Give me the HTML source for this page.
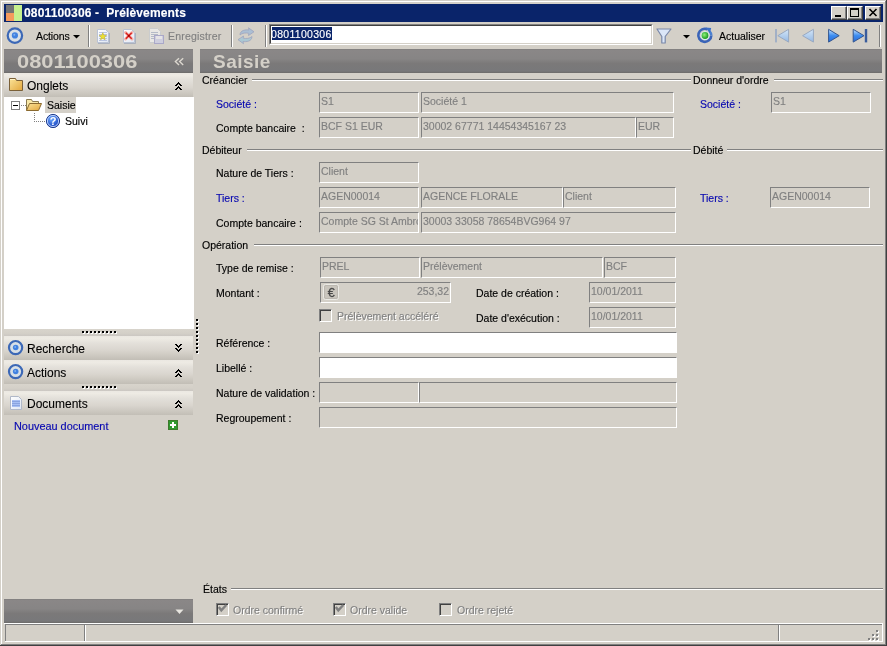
<!DOCTYPE html>
<html><head><meta charset="utf-8">
<style>
*{margin:0;padding:0;box-sizing:border-box}
html,body{width:887px;height:646px;overflow:hidden;background:#D4D0C8;font-family:"Liberation Sans",sans-serif;font-size:10.5px;color:#000}
.a{position:absolute}
.t{position:absolute;white-space:pre;line-height:20px;will-change:transform;-webkit-text-stroke:0.15px currentColor}
.hdr{position:absolute;background:linear-gradient(#7d7b7b 0px,#8a8787 1px,#878585 40%,#7b7979 60%,#78787a 92%,#6d6b69 100%)}
.sec{position:absolute;background:linear-gradient(#ebe8e2 0%,#eeebe4 10%,#e3e0da 30%,#d9d5ce 60%,#cbc7bf 85%,#c2beb6 100%)}
.in{position:absolute;border-top:1px solid #808080;border-left:1px solid #808080;border-bottom:1px solid #fff;border-right:1px solid #fff}
.btn{position:absolute;width:16px;height:14px;background:#D4D0C8;border-top:1px solid #fff;border-left:1px solid #fff;border-right:1px solid #404040;border-bottom:1px solid #404040;box-shadow:inset -1px -1px 0 #808080}
svg{position:absolute;overflow:visible}
</style></head><body>
<div class="a" style="left:1px;top:1px;width:884px;height:1px;background:#fff"></div>
<div class="a" style="left:1px;top:1px;width:1px;height:643px;background:#fff"></div>
<div class="a" style="left:885px;top:1px;width:1px;height:644px;background:#808080"></div>
<div class="a" style="left:886px;top:0px;width:1px;height:646px;background:#404040"></div>
<div class="a" style="left:1px;top:644px;width:885px;height:1px;background:#808080"></div>
<div class="a" style="left:0px;top:645px;width:887px;height:1px;background:#404040"></div>
<div class="a" style="left:4px;top:4px;width:879px;height:18px;background:#0A246A"></div>
<div class="a" style="left:6px;top:5px;width:8px;height:8px;background:#737373"></div>
<div class="a" style="left:6px;top:13px;width:8px;height:8px;background:#F59A5C"></div>
<div class="a" style="left:14px;top:5px;width:8px;height:16px;background:#C6F08E"></div>
<div class="t" style="left:24px;top:3px;font-size:12px;color:#fff;font-weight:bold;letter-spacing:0.15px;">0801100306 -  Prélèvements</div>
<div class="btn" style="left:831px;top:6px"></div>
<div class="btn" style="left:847px;top:6px"></div>
<div class="btn" style="left:865px;top:6px"></div>
<div class="t" style="left:36px;top:26px;letter-spacing:-0.1px;">Actions</div>
<div class="a" style="left:88px;top:25px;width:1px;height:22px;background:#808080"></div>
<div class="a" style="left:89px;top:25px;width:1px;height:22px;background:#fff"></div>
<div class="a" style="left:231px;top:25px;width:1px;height:22px;background:#808080"></div>
<div class="a" style="left:232px;top:25px;width:1px;height:22px;background:#fff"></div>
<div class="a" style="left:265px;top:25px;width:1px;height:22px;background:#808080"></div>
<div class="a" style="left:266px;top:25px;width:1px;height:22px;background:#fff"></div>
<div class="t" style="left:168px;top:26px;color:#808080;letter-spacing:0.2px;">Enregistrer</div>
<div class="a" style="left:269px;top:24px;width:384px;height:21px;background:#fff;border-top:1px solid #808080;border-left:1px solid #808080;border-right:1px solid #fff;border-bottom:1px solid #fff"></div>
<div class="a" style="left:270px;top:25px;width:382px;height:19px;border-top:1px solid #404040;border-left:1px solid #404040;border-right:1px solid #D4D0C8;border-bottom:1px solid #D4D0C8"></div>
<div class="a" style="left:272px;top:27px;width:60px;height:13px;background:#0A246A"></div>
<div class="t" style="left:271px;top:24px;color:#fff;letter-spacing:0.3px;clip-path:inset(0 0 0 1px);">0801100306</div>
<div class="t" style="left:719px;top:26px;">Actualiser</div>
<div class="a" style="left:879px;top:25px;width:1px;height:22px;background:#808080"></div>
<div class="a" style="left:880px;top:25px;width:1px;height:22px;background:#fff"></div>
<div class="hdr" style="left:4px;top:49px;width:189px;height:24px"></div>
<div class="t" style="left:17px;top:52px;font-size:19px;color:#D4D0C8;font-weight:bold;letter-spacing:0px;transform:scaleX(1.15);transform-origin:0 0;-webkit-text-stroke:0;">0801100306</div>
<div class="sec" style="left:4px;top:73px;width:189px;height:24px"></div>
<div class="t" style="left:27px;top:76px;font-size:12px;-webkit-text-stroke:0.1px currentColor;">Onglets</div>
<div class="a" style="left:4px;top:97px;width:190px;height:232px;background:#fff"></div>
<div class="a" style="left:4px;top:329px;width:189px;height:7px;background:linear-gradient(#d8d4cc,#d4d0c8 60%,#cbc7c2)"></div>
<div class="a" style="left:4px;top:384px;width:189px;height:7px;background:linear-gradient(#d8d4cc,#d4d0c8 60%,#cbc7c2)"></div>
<div class="a" style="left:45px;top:97px;width:31px;height:16px;background:#D4D0C8"></div>
<div class="t" style="left:47px;top:95px;">Saisie</div>
<div class="t" style="left:65px;top:111px;">Suivi</div>
<div class="sec" style="left:4px;top:336px;width:189px;height:24px"></div>
<div class="t" style="left:27px;top:339px;font-size:12px;-webkit-text-stroke:0.1px currentColor;">Recherche</div>
<div class="sec" style="left:4px;top:360px;width:189px;height:24px"></div>
<div class="t" style="left:27px;top:363px;font-size:12px;-webkit-text-stroke:0.1px currentColor;">Actions</div>
<div class="sec" style="left:4px;top:391px;width:189px;height:24px"></div>
<div class="t" style="left:27px;top:394px;font-size:12px;-webkit-text-stroke:0.1px currentColor;">Documents</div>
<div class="t" style="left:14px;top:416px;font-size:10.9px;color:#0808b0;">Nouveau document</div>
<div class="hdr" style="left:4px;top:599px;width:189px;height:24px"></div>
<div class="hdr" style="left:200px;top:49px;width:682px;height:24px"></div>
<div class="t" style="left:213px;top:52px;font-size:19px;color:#D4D0C8;font-weight:bold;letter-spacing:0.5px;-webkit-text-stroke:0;">Saisie</div>
<div class="t" style="left:202px;top:70px;">Créancier</div>
<div class="a" style="left:252px;top:79px;width:439px;height:1px;background:#808080"></div>
<div class="a" style="left:252px;top:80px;width:439px;height:1px;background:#fff"></div>
<div class="t" style="left:693px;top:70px;">Donneur d'ordre</div>
<div class="a" style="left:774px;top:79px;width:109px;height:1px;background:#808080"></div>
<div class="a" style="left:774px;top:80px;width:109px;height:1px;background:#fff"></div>
<div class="t" style="left:216px;top:94px;color:#0808b0;">Société :</div>
<div class="in" style="left:319px;top:92px;width:100px;height:21px;"></div>
<div class="t" style="left:321px;top:91px;color:#808080;width:97px;overflow:hidden;">S1</div>
<div class="in" style="left:421px;top:92px;width:253px;height:21px;"></div>
<div class="t" style="left:423px;top:91px;color:#808080;width:250px;overflow:hidden;">Société 1</div>
<div class="t" style="left:216px;top:118px;">Compte bancaire  :</div>
<div class="in" style="left:319px;top:117px;width:100px;height:21px;"></div>
<div class="t" style="left:321px;top:116px;color:#808080;width:97px;overflow:hidden;">BCF S1 EUR</div>
<div class="in" style="left:421px;top:117px;width:215px;height:21px;"></div>
<div class="t" style="left:423px;top:116px;color:#808080;width:212px;overflow:hidden;">30002 67771 14454345167 23</div>
<div class="in" style="left:636px;top:117px;width:38px;height:21px;"></div>
<div class="t" style="left:638px;top:116px;color:#808080;width:35px;overflow:hidden;">EUR</div>
<div class="t" style="left:700px;top:94px;color:#0808b0;">Société :</div>
<div class="in" style="left:771px;top:92px;width:100px;height:21px;"></div>
<div class="t" style="left:773px;top:91px;color:#808080;width:97px;overflow:hidden;">S1</div>
<div class="t" style="left:202px;top:140px;">Débiteur</div>
<div class="a" style="left:247px;top:149px;width:444px;height:1px;background:#808080"></div>
<div class="a" style="left:247px;top:150px;width:444px;height:1px;background:#fff"></div>
<div class="t" style="left:693px;top:140px;">Débité</div>
<div class="a" style="left:727px;top:149px;width:156px;height:1px;background:#808080"></div>
<div class="a" style="left:727px;top:150px;width:156px;height:1px;background:#fff"></div>
<div class="t" style="left:216px;top:163px;">Nature de Tiers :</div>
<div class="in" style="left:319px;top:162px;width:100px;height:21px;"></div>
<div class="t" style="left:321px;top:161px;color:#808080;width:97px;overflow:hidden;">Client</div>
<div class="t" style="left:216px;top:188px;color:#0808b0;">Tiers :</div>
<div class="in" style="left:319px;top:187px;width:100px;height:21px;"></div>
<div class="t" style="left:321px;top:186px;color:#808080;width:97px;overflow:hidden;">AGEN00014</div>
<div class="in" style="left:421px;top:187px;width:142px;height:21px;"></div>
<div class="t" style="left:423px;top:186px;color:#808080;width:139px;overflow:hidden;">AGENCE FLORALE</div>
<div class="in" style="left:563px;top:187px;width:113px;height:21px;"></div>
<div class="t" style="left:565px;top:186px;color:#808080;width:110px;overflow:hidden;">Client</div>
<div class="t" style="left:216px;top:213px;">Compte bancaire :</div>
<div class="in" style="left:319px;top:212px;width:100px;height:21px;"></div>
<div class="t" style="left:321px;top:211px;color:#808080;width:97px;overflow:hidden;">Compte SG St Ambroise</div>
<div class="in" style="left:421px;top:212px;width:255px;height:21px;"></div>
<div class="t" style="left:423px;top:211px;color:#808080;width:252px;overflow:hidden;">30003 33058 78654BVG964 97</div>
<div class="t" style="left:700px;top:188px;color:#0808b0;">Tiers :</div>
<div class="in" style="left:770px;top:187px;width:100px;height:21px;"></div>
<div class="t" style="left:772px;top:186px;color:#808080;width:97px;overflow:hidden;">AGEN00014</div>
<div class="t" style="left:202px;top:235px;">Opération</div>
<div class="a" style="left:254px;top:244px;width:629px;height:1px;background:#808080"></div>
<div class="a" style="left:254px;top:245px;width:629px;height:1px;background:#fff"></div>
<div class="t" style="left:216px;top:258px;">Type de remise :</div>
<div class="in" style="left:320px;top:257px;width:100px;height:21px;"></div>
<div class="t" style="left:322px;top:256px;color:#808080;width:97px;overflow:hidden;">PREL</div>
<div class="in" style="left:421px;top:257px;width:182px;height:21px;"></div>
<div class="t" style="left:423px;top:256px;color:#808080;width:179px;overflow:hidden;">Prélèvement</div>
<div class="in" style="left:604px;top:257px;width:72px;height:21px;"></div>
<div class="t" style="left:606px;top:256px;color:#808080;width:69px;overflow:hidden;">BCF</div>
<div class="t" style="left:216px;top:283px;">Montant :</div>
<div class="in" style="left:320px;top:282px;width:131px;height:21px;"></div>
<div class="t" style="left:320px;top:281px;color:#808080;width:129px;text-align:right;">253,32</div>
<div class="t" style="left:476px;top:283px;">Date de création :</div>
<div class="in" style="left:589px;top:282px;width:87px;height:21px;"></div>
<div class="t" style="left:591px;top:281px;color:#808080;width:84px;overflow:hidden;">10/01/2011</div>
<div class="t" style="left:476px;top:308px;">Date d'exécution :</div>
<div class="in" style="left:589px;top:307px;width:87px;height:21px;"></div>
<div class="t" style="left:591px;top:306px;color:#808080;width:84px;overflow:hidden;">10/01/2011</div>
<div class="a" style="left:319px;top:309px;width:13px;height:13px;border-top:1px solid #808080;border-left:1px solid #808080;border-bottom:1px solid #fff;border-right:1px solid #fff;box-shadow:inset 1px 1px 0 #404040, inset -1px -1px 0 #D4D0C8"></div>
<div class="t" style="left:337px;top:306px;color:#808080;text-shadow:1px 1px 0 #fff;">Prélèvement accéléré</div>
<div class="t" style="left:216px;top:333px;">Référence :</div>
<div class="in" style="left:319px;top:332px;width:358px;height:21px;background:#fff;"></div>
<div class="t" style="left:216px;top:358px;">Libellé :</div>
<div class="in" style="left:319px;top:357px;width:358px;height:21px;background:#fff;"></div>
<div class="t" style="left:216px;top:383px;">Nature de validation :</div>
<div class="in" style="left:319px;top:382px;width:100px;height:21px;"></div>
<div class="in" style="left:419px;top:382px;width:258px;height:21px;"></div>
<div class="t" style="left:216px;top:408px;">Regroupement :</div>
<div class="in" style="left:319px;top:407px;width:358px;height:21px;"></div>
<div class="t" style="left:203px;top:579px;">États</div>
<div class="a" style="left:231px;top:588px;width:652px;height:1px;background:#808080"></div>
<div class="a" style="left:231px;top:589px;width:652px;height:1px;background:#fff"></div>
<div class="a" style="left:216px;top:603px;width:13px;height:13px;border-top:1px solid #808080;border-left:1px solid #808080;border-bottom:1px solid #fff;border-right:1px solid #fff;box-shadow:inset 1px 1px 0 #404040, inset -1px -1px 0 #D4D0C8"></div>
<div class="t" style="left:233px;top:600px;color:#808080;text-shadow:1px 1px 0 #fff;">Ordre confirmé</div>
<div class="a" style="left:333px;top:603px;width:13px;height:13px;border-top:1px solid #808080;border-left:1px solid #808080;border-bottom:1px solid #fff;border-right:1px solid #fff;box-shadow:inset 1px 1px 0 #404040, inset -1px -1px 0 #D4D0C8"></div>
<div class="t" style="left:350px;top:600px;color:#808080;text-shadow:1px 1px 0 #fff;">Ordre valide</div>
<div class="a" style="left:439px;top:603px;width:13px;height:13px;border-top:1px solid #808080;border-left:1px solid #808080;border-bottom:1px solid #fff;border-right:1px solid #fff;box-shadow:inset 1px 1px 0 #404040, inset -1px -1px 0 #D4D0C8"></div>
<div class="t" style="left:457px;top:600px;color:#808080;text-shadow:1px 1px 0 #fff;">Ordre rejeté</div>
<div class="a" style="left:4px;top:623px;width:879px;height:1px;background:#fff"></div>
<div class="a" style="left:5px;top:624px;width:878px;height:1px;background:#808080"></div>
<div class="a" style="left:5px;top:624px;width:1px;height:18px;background:#808080"></div>
<div class="a" style="left:5px;top:641px;width:878px;height:1px;background:#fff"></div>
<div class="a" style="left:882px;top:624px;width:1px;height:18px;background:#fff"></div>
<div class="a" style="left:84px;top:625px;width:1px;height:16px;background:#808080"></div>
<div class="a" style="left:85px;top:625px;width:1px;height:16px;background:#fff"></div>
<div class="a" style="left:778px;top:625px;width:1px;height:16px;background:#808080"></div>
<div class="a" style="left:779px;top:625px;width:1px;height:16px;background:#fff"></div>
<svg class="a" style="left:0;top:0" width="887" height="646" viewBox="0 0 887 646"><rect x="835" y="15" width="6" height="2" fill="#000"/><rect x="850.5" y="8.5" width="8" height="8" fill="none" stroke="#000" stroke-width="1"/><rect x="850" y="8" width="9" height="2" fill="#000"/><path d="M869.5,9 L876.5,16 M876.5,9 L869.5,16" stroke="#000" stroke-width="1.6"/><circle cx="14.9" cy="35.6" r="7.2" fill="#d9e0e6" stroke="#3c68b6" stroke-width="2.2"/><circle cx="14.9" cy="35.4" r="3.1" fill="#4282e0"/><circle cx="14.3" cy="34.8" r="1" fill="#7fb0f0"/><path d="M73,35 L80,35 L76.5,38.6 Z" fill="#000"/><path d="M683,35 L690,35 L686.5,38.6 Z" fill="#000"/><defs><linearGradient id="pg" x1="0" y1="0" x2="1" y2="1"><stop offset="0" stop-color="#ffffff"/><stop offset="1" stop-color="#dfe6f3"/></linearGradient><linearGradient id="bl" x1="0" y1="0" x2="0" y2="1"><stop offset="0" stop-color="#c8e4ff"/><stop offset="0.5" stop-color="#3c8cf0"/><stop offset="1" stop-color="#2a6ad8"/></linearGradient><linearGradient id="bld" x1="0" y1="0" x2="0" y2="1"><stop offset="0" stop-color="#d4e6f8"/><stop offset="1" stop-color="#94b8e4"/></linearGradient><radialGradient id="gr" cx="0.4" cy="0.4" r="0.6"><stop offset="0" stop-color="#8ef07a"/><stop offset="1" stop-color="#1c9a1c"/></radialGradient><linearGradient id="fo" x1="0" y1="0" x2="1" y2="1"><stop offset="0" stop-color="#fbe49a"/><stop offset="1" stop-color="#e2a63c"/></linearGradient><radialGradient id="hb" cx="0.4" cy="0.35" r="0.7"><stop offset="0" stop-color="#6aa8ff"/><stop offset="1" stop-color="#1038b8"/></radialGradient></defs><path d="M97.5,29.5 L105.5,29.5 L108.5,32.5 L108.5,42.5 L97.5,42.5 Z" fill="url(#pg)" stroke="#b9c2d4" stroke-width="1"/><path d="M109.5,33 L109.5,43.5 L98,43.5" fill="none" stroke="#9aa4b8" stroke-width="1" opacity="0.7"/><rect x="99" y="32" width="8" height="1" fill="#b8c4e4"/><rect x="99" y="34" width="8" height="1" fill="#b8c4e4"/><rect x="99" y="36" width="8" height="1" fill="#b8c4e4"/><rect x="99" y="38" width="8" height="1" fill="#b8c4e4"/><rect x="99" y="40" width="8" height="1" fill="#b8c4e4"/><path d="M102.80,32.70 L103.80,35.22 L106.51,35.39 L104.42,37.13 L105.09,39.76 L102.80,38.30 L100.51,39.76 L101.18,37.13 L99.09,35.39 L101.80,35.22 Z" fill="#ece030" stroke="#bfb030" stroke-width="0.6"/><path d="M123.5,29.5 L131.5,29.5 L134.5,32.5 L134.5,42.5 L123.5,42.5 Z" fill="url(#pg)" stroke="#b9c2d4" stroke-width="1"/><path d="M135.5,33 L135.5,43.5 L124,43.5" fill="none" stroke="#9aa4b8" stroke-width="1" opacity="0.7"/><path d="M125.5,32.5 L132,39 M132,32.5 L125.5,39" stroke="#f4b0a8" stroke-width="3" stroke-linecap="round"/><path d="M125.8,32.8 L131.7,38.7 M131.7,32.8 L125.8,38.7" stroke="#d82020" stroke-width="1.4"/><circle cx="128.8" cy="35.8" r="1" fill="#a00000"/><g opacity="0.55"><path d="M149.5,28.5 L157.5,28.5 L160.5,31.5 L160.5,42.5 L149.5,42.5 Z" fill="#fafbfd" stroke="#c2c8d4"/><rect x="151" y="32" width="7" height="1" fill="#9aa8c8"/><rect x="151" y="34" width="7" height="1" fill="#9aa8c8"/><rect x="151" y="36" width="5" height="1" fill="#9aa8c8"/><rect x="151" y="38" width="5" height="1" fill="#9aa8c8"/><rect x="154.5" y="35.5" width="9" height="8" fill="#c8ccf0" stroke="#8888c8"/><rect x="156" y="36" width="6" height="3" fill="#f4f4ff"/></g><g opacity="0.6"><path d="M240,35 C240,30 246,29.5 249,30 L248.5,27.8 L254,31.8 L248.5,35.5 L248.8,33.3 C246,32.6 242,33 240,35 Z" fill="#8fb4dc" stroke="#7a88b8" stroke-width="0.8"/><path d="M252,36.5 C252,41.5 246,42 243,41.5 L243.5,43.7 L238,39.7 L243.5,36 L243.2,38.2 C246,38.9 250,38.5 252,36.5 Z" fill="#8fc4dc" stroke="#7a88b8" stroke-width="0.8"/></g><path d="M657,29 L671,29 L665.2,36.5 L665.2,43 L661.8,43 L661.8,36.5 Z" fill="#dbe6f8" stroke="#7a88a8" stroke-width="1.2" stroke-linejoin="round"/><path d="M707.5,29.4 A6.5,6.5 0 1 0 711.3,35.5" fill="none" stroke="#3a64b8" stroke-width="2.6"/><path d="M711.3,35.5 A6.5,6.5 0 0 0 709.5,31" fill="none" stroke="#4a80d0" stroke-width="2.4"/><path d="M705.5,27.6 L711.2,28 L709.8,33.2 Z" fill="#3c70c8"/><circle cx="705" cy="35.6" r="4.3" fill="#d8ecf4"/><circle cx="705" cy="35.5" r="3.4" fill="url(#gr)"/><rect x="775" y="29" width="2" height="13.4" fill="#a2b0c6"/><path d="M777.8,35.7 L788.6,29.3 L788.6,42.1 Z" fill="url(#bld)" stroke="#98a8c0" stroke-width="1"/><path d="M802.6,35.7 L813.4,29.3 L813.4,42.1 Z" fill="url(#bld)" stroke="#98a8c0" stroke-width="1"/><path d="M828.6,29.3 L839.2,35.7 L828.6,42.1 Z" fill="url(#bl)" stroke="#33558f" stroke-width="1"/><path d="M853.2,29.3 L864,35.7 L853.2,42.1 Z" fill="url(#bl)" stroke="#33558f" stroke-width="1"/><rect x="864.8" y="29" width="2.4" height="13.4" fill="#3a5c9c"/><path d="M9.5,90.5 L9.5,78.5 L15.5,78.5 L16.5,80.5 L22.5,80.5 L22.5,90.5 Z" fill="url(#fo)" stroke="#7a6038" stroke-width="1"/><rect x="10" y="79" width="5" height="1" fill="#fff4c8"/><path d="M179,58.2 L175.4,61.6 L179,65 M183.2,58.2 L179.6,61.6 L183.2,65" fill="none" stroke="#dcd8d0" stroke-width="1.4"/><rect x="178" y="82" width="1" height="1" fill="#000"/><rect x="177" y="83" width="3" height="1" fill="#000"/><rect x="176" y="84" width="2" height="1" fill="#000"/><rect x="179" y="84" width="2" height="1" fill="#000"/><rect x="175" y="85" width="2" height="1" fill="#000"/><rect x="180" y="85" width="2" height="1" fill="#000"/><rect x="178" y="86" width="1" height="1" fill="#000"/><rect x="177" y="87" width="3" height="1" fill="#000"/><rect x="176" y="88" width="2" height="1" fill="#000"/><rect x="179" y="88" width="2" height="1" fill="#000"/><rect x="175" y="89" width="2" height="1" fill="#000"/><rect x="180" y="89" width="2" height="1" fill="#000"/><rect x="175" y="344" width="2" height="1" fill="#000"/><rect x="180" y="344" width="2" height="1" fill="#000"/><rect x="176" y="345" width="2" height="1" fill="#000"/><rect x="179" y="345" width="2" height="1" fill="#000"/><rect x="177" y="346" width="3" height="1" fill="#000"/><rect x="178" y="347" width="1" height="1" fill="#000"/><rect x="175" y="348" width="2" height="1" fill="#000"/><rect x="180" y="348" width="2" height="1" fill="#000"/><rect x="176" y="349" width="2" height="1" fill="#000"/><rect x="179" y="349" width="2" height="1" fill="#000"/><rect x="177" y="350" width="3" height="1" fill="#000"/><rect x="178" y="351" width="1" height="1" fill="#000"/><rect x="178" y="369" width="1" height="1" fill="#000"/><rect x="177" y="370" width="3" height="1" fill="#000"/><rect x="176" y="371" width="2" height="1" fill="#000"/><rect x="179" y="371" width="2" height="1" fill="#000"/><rect x="175" y="372" width="2" height="1" fill="#000"/><rect x="180" y="372" width="2" height="1" fill="#000"/><rect x="178" y="373" width="1" height="1" fill="#000"/><rect x="177" y="374" width="3" height="1" fill="#000"/><rect x="176" y="375" width="2" height="1" fill="#000"/><rect x="179" y="375" width="2" height="1" fill="#000"/><rect x="175" y="376" width="2" height="1" fill="#000"/><rect x="180" y="376" width="2" height="1" fill="#000"/><rect x="178" y="400" width="1" height="1" fill="#000"/><rect x="177" y="401" width="3" height="1" fill="#000"/><rect x="176" y="402" width="2" height="1" fill="#000"/><rect x="179" y="402" width="2" height="1" fill="#000"/><rect x="175" y="403" width="2" height="1" fill="#000"/><rect x="180" y="403" width="2" height="1" fill="#000"/><rect x="178" y="404" width="1" height="1" fill="#000"/><rect x="177" y="405" width="3" height="1" fill="#000"/><rect x="176" y="406" width="2" height="1" fill="#000"/><rect x="179" y="406" width="2" height="1" fill="#000"/><rect x="175" y="407" width="2" height="1" fill="#000"/><rect x="180" y="407" width="2" height="1" fill="#000"/><rect x="11.5" y="101.5" width="8" height="8" fill="#fff" stroke="#808080"/><rect x="13" y="105" width="5" height="1" fill="#000"/><rect x="21" y="105" width="1" height="1" fill="#808080"/><rect x="23" y="105" width="1" height="1" fill="#808080"/><rect x="25" y="105" width="1" height="1" fill="#808080"/><rect x="34" y="113" width="1" height="1" fill="#808080"/><rect x="34" y="115" width="1" height="1" fill="#808080"/><rect x="34" y="117" width="1" height="1" fill="#808080"/><rect x="34" y="119" width="1" height="1" fill="#808080"/><rect x="34" y="121" width="1" height="1" fill="#808080"/><rect x="36" y="121" width="1" height="1" fill="#808080"/><rect x="38" y="121" width="1" height="1" fill="#808080"/><rect x="40" y="121" width="1" height="1" fill="#808080"/><rect x="42" y="121" width="1" height="1" fill="#808080"/><rect x="44" y="121" width="1" height="1" fill="#808080"/><path d="M26.5,110.5 L26.5,99.5 L31.5,99.5 L32.5,101.5 L38.5,101.5 L38.5,103.5" fill="#f8e8a8" stroke="#8a7a50" stroke-width="1"/><path d="M26.5,110.5 L29.5,103.5 L41.5,103.5 L38.5,110.5 Z" fill="url(#fo)" stroke="#8a6a30" stroke-width="1"/><circle cx="53" cy="121" r="6.6" fill="url(#hb)" stroke="#203c8c" stroke-width="1"/><circle cx="53" cy="121" r="5.6" fill="none" stroke="#c8dcff" stroke-width="0.9"/><text x="53" y="125.3" font-family="Liberation Sans" font-weight="bold" font-size="11" fill="#fff" text-anchor="middle">?</text><circle cx="15.6" cy="347.6" r="6.6" fill="#d9e0e6" stroke="#3c68b6" stroke-width="2.2"/><circle cx="15.7" cy="347.5" r="2.8" fill="#4282e0"/><circle cx="15.2" cy="347.0" r="0.9" fill="#7fb0f0"/><circle cx="15.6" cy="371.6" r="6.6" fill="#d9e0e6" stroke="#3c68b6" stroke-width="2.2"/><circle cx="15.7" cy="371.5" r="2.8" fill="#4282e0"/><circle cx="15.2" cy="371.0" r="0.9" fill="#7fb0f0"/><path d="M10.5,396.5 L18.5,396.5 L21.5,399.5 L21.5,409.5 L10.5,409.5 Z" fill="url(#pg)" stroke="#b0b8c8" stroke-width="1"/><rect x="12" y="400" width="8" height="7" fill="#a8c0f4"/><rect x="12" y="401" width="8" height="1" fill="#8aa4e0"/><rect x="12" y="403" width="8" height="1" fill="#8aa4e0"/><rect x="12" y="405" width="8" height="1" fill="#8aa4e0"/><rect x="83" y="332" width="2" height="2" fill="#fff"/><rect x="82" y="331" width="2" height="2" fill="#000"/><rect x="87" y="332" width="2" height="2" fill="#fff"/><rect x="86" y="331" width="2" height="2" fill="#000"/><rect x="91" y="332" width="2" height="2" fill="#fff"/><rect x="90" y="331" width="2" height="2" fill="#000"/><rect x="95" y="332" width="2" height="2" fill="#fff"/><rect x="94" y="331" width="2" height="2" fill="#000"/><rect x="99" y="332" width="2" height="2" fill="#fff"/><rect x="98" y="331" width="2" height="2" fill="#000"/><rect x="103" y="332" width="2" height="2" fill="#fff"/><rect x="102" y="331" width="2" height="2" fill="#000"/><rect x="107" y="332" width="2" height="2" fill="#fff"/><rect x="106" y="331" width="2" height="2" fill="#000"/><rect x="111" y="332" width="2" height="2" fill="#fff"/><rect x="110" y="331" width="2" height="2" fill="#000"/><rect x="115" y="332" width="2" height="2" fill="#fff"/><rect x="114" y="331" width="2" height="2" fill="#000"/><rect x="83" y="387" width="2" height="2" fill="#fff"/><rect x="82" y="386" width="2" height="2" fill="#000"/><rect x="87" y="387" width="2" height="2" fill="#fff"/><rect x="86" y="386" width="2" height="2" fill="#000"/><rect x="91" y="387" width="2" height="2" fill="#fff"/><rect x="90" y="386" width="2" height="2" fill="#000"/><rect x="95" y="387" width="2" height="2" fill="#fff"/><rect x="94" y="386" width="2" height="2" fill="#000"/><rect x="99" y="387" width="2" height="2" fill="#fff"/><rect x="98" y="386" width="2" height="2" fill="#000"/><rect x="103" y="387" width="2" height="2" fill="#fff"/><rect x="102" y="386" width="2" height="2" fill="#000"/><rect x="107" y="387" width="2" height="2" fill="#fff"/><rect x="106" y="386" width="2" height="2" fill="#000"/><rect x="111" y="387" width="2" height="2" fill="#fff"/><rect x="110" y="386" width="2" height="2" fill="#000"/><rect x="115" y="387" width="2" height="2" fill="#fff"/><rect x="114" y="386" width="2" height="2" fill="#000"/><rect x="197" y="320" width="2" height="2" fill="#fff"/><rect x="196" y="319" width="2" height="2" fill="#000"/><rect x="197" y="324" width="2" height="2" fill="#fff"/><rect x="196" y="323" width="2" height="2" fill="#000"/><rect x="197" y="328" width="2" height="2" fill="#fff"/><rect x="196" y="327" width="2" height="2" fill="#000"/><rect x="197" y="332" width="2" height="2" fill="#fff"/><rect x="196" y="331" width="2" height="2" fill="#000"/><rect x="197" y="336" width="2" height="2" fill="#fff"/><rect x="196" y="335" width="2" height="2" fill="#000"/><rect x="197" y="340" width="2" height="2" fill="#fff"/><rect x="196" y="339" width="2" height="2" fill="#000"/><rect x="197" y="344" width="2" height="2" fill="#fff"/><rect x="196" y="343" width="2" height="2" fill="#000"/><rect x="197" y="348" width="2" height="2" fill="#fff"/><rect x="196" y="347" width="2" height="2" fill="#000"/><rect x="197" y="352" width="2" height="2" fill="#fff"/><rect x="196" y="351" width="2" height="2" fill="#000"/><rect x="168.5" y="420.5" width="9" height="9" fill="#2f9a2f" stroke="#3c7a2c"/><rect x="170" y="424" width="6" height="2" fill="#fff"/><rect x="172" y="422" width="2" height="6" fill="#fff"/><path d="M175.5,609.5 L183.5,609.5 L179.5,614 Z" fill="#e8e6e0"/><rect x="323.5" y="284.5" width="15" height="15" rx="2" fill="#c9c5bd" stroke="#ecebe6"/><rect x="324.5" y="285.5" width="13" height="13" rx="1.5" fill="none" stroke="#b8b4ac" stroke-width="0.8"/><text x="331.3" y="296.8" font-family="Liberation Sans" font-size="12.5" fill="#484848" stroke="#484848" stroke-width="0.3" text-anchor="middle">€</text><path d="M218.8,607 L221.3,610.3 L226.3,605" transform="translate(0,0)" fill="none" stroke="#808080" stroke-width="2.4"/><path d="M218.8,607 L221.3,610.3 L226.3,605" transform="translate(117,0)" fill="none" stroke="#808080" stroke-width="2.4"/><rect x="877" y="631" width="2" height="2" fill="#fff"/><rect x="876" y="630" width="2" height="2" fill="#808080"/><rect x="873" y="635" width="2" height="2" fill="#fff"/><rect x="872" y="634" width="2" height="2" fill="#808080"/><rect x="877" y="635" width="2" height="2" fill="#fff"/><rect x="876" y="634" width="2" height="2" fill="#808080"/><rect x="869" y="639" width="2" height="2" fill="#fff"/><rect x="868" y="638" width="2" height="2" fill="#808080"/><rect x="873" y="639" width="2" height="2" fill="#fff"/><rect x="872" y="638" width="2" height="2" fill="#808080"/><rect x="877" y="639" width="2" height="2" fill="#fff"/><rect x="876" y="638" width="2" height="2" fill="#808080"/></svg>
</body></html>
